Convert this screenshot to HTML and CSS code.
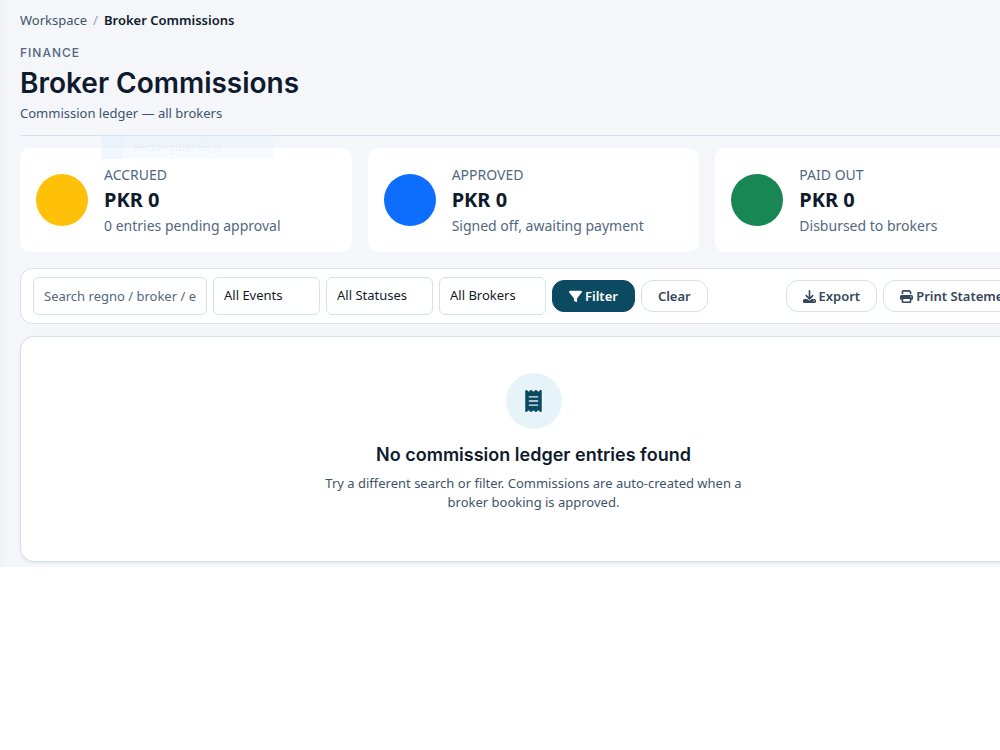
FILE: index.html
```html
<!DOCTYPE html>
<html lang="en">
<head>
    <meta charset="UTF-8">
    <meta name="viewport" content="width=device-width, initial-scale=1.0">
    <title>Broker Commissions</title>
    <link rel="stylesheet" href="styles.css">
</head>
<body>
    <main class="page">
        <nav class="breadcrumb" aria-label="Breadcrumb">
            <a href="#">Workspace</a>
            <span class="sep">/</span>
            <span class="current">Broker Commissions</span>
        </nav>

        <header class="page-header">
            <div class="eyebrow">FINANCE</div>
            <h1>Broker Commissions</h1>
            <p>Commission ledger — all brokers</p>
            <div class="snip-hint"><span class="snip-mark"></span>Rectangular Snip</div>
        </header>

        <section class="stats">
            <div class="stat">
                <span class="dot dot-accrued"></span>
                <div>
                    <div class="stat-label">ACCRUED</div>
                    <div class="stat-value">PKR 0</div>
                    <div class="stat-note">0 entries pending approval</div>
                </div>
            </div>
            <div class="stat">
                <span class="dot dot-approved"></span>
                <div>
                    <div class="stat-label">APPROVED</div>
                    <div class="stat-value">PKR 0</div>
                    <div class="stat-note">Signed off, awaiting payment</div>
                </div>
            </div>
            <div class="stat">
                <span class="dot dot-paid"></span>
                <div>
                    <div class="stat-label">PAID OUT</div>
                    <div class="stat-value">PKR 0</div>
                    <div class="stat-note">Disbursed to brokers</div>
                </div>
            </div>
        </section>

        <form class="filters">
            <input class="field search" type="text" aria-label="Search" placeholder="Search regno / broker / event">
            <select class="field" aria-label="Event"><option>All Events</option></select>
            <select class="field" aria-label="Status"><option>All Statuses</option></select>
            <select class="field" aria-label="Broker"><option>All Brokers</option></select>
            <button class="btn btn-primary" type="button">
                <svg class="icon" viewBox="0 0 512 512"><path d="M3.9 54.9C10.5 40.9 24.5 32 40 32H472c15.5 0 29.5 8.9 36.1 22.9s4.6 30.5-5.2 42.5L320 320.9V448c0 12.1-6.8 23.2-17.7 28.6s-23.8 4.3-33.5-3l-64-48c-8.1-6-12.8-15.5-12.8-25.6V320.9L9 97.3C-.7 85.4-2.8 68.8 3.9 54.9z"/></svg>
                Filter
            </button>
            <button class="btn" type="button">Clear</button>
            <div class="actions">
                <button class="btn" type="button">
                    <svg class="icon" viewBox="0 0 512 512"><path d="M288 32c0-17.7-14.3-32-32-32s-32 14.3-32 32V274.7l-73.4-73.4c-12.5-12.5-32.8-12.5-45.3 0s-12.5 32.8 0 45.3l128 128c12.5 12.5 32.8 12.5 45.3 0l128-128c12.5-12.5 12.5-32.8 0-45.3s-32.8-12.5-45.3 0L288 274.7V32zM64 352c-35.3 0-64 28.7-64 64v32c0 35.3 28.7 64 64 64H448c35.3 0 64-28.7 64-64V416c0-35.3-28.7-64-64-64H346.5l-45.3 45.3c-25 25-65.5 25-90.5 0L165.5 352H64zm368 56a24 24 0 1 1 0 48 24 24 0 1 1 0-48z"/></svg>
                    Export
                </button>
                <button class="btn" type="button">
                    <svg class="icon" viewBox="0 0 512 512"><path d="M128 0C92.7 0 64 28.7 64 64v96h64V64H354.7L384 93.3V160h64V93.3c0-17-6.7-33.3-18.7-45.3L400 18.7C388 6.7 371.7 0 354.7 0H128zM384 352v32 64H128V384 368 352H384zm64 32h32c17.7 0 32-14.3 32-32V256c0-35.3-28.7-64-64-64H64c-35.3 0-64 28.7-64 64v96c0 17.7 14.3 32 32 32H64v64c0 35.3 28.7 64 64 64H384c35.3 0 64-28.7 64-64V384zM432 248a24 24 0 1 1 0 48 24 24 0 1 1 0-48z"/></svg>
                    Print Statement
                </button>
            </div>
        </form>

        <section class="empty">
            <div class="empty-icon">
                <svg viewBox="0 0 384 512"><path d="M14 2.2C22.5-1.7 32.5-.3 39.6 5.8L80 40.4 120.4 5.8c9-7.7 22.3-7.7 31.2 0L192 40.4 232.4 5.8c9-7.7 22.3-7.7 31.2 0L304 40.4 344.4 5.8c7.1-6.1 17.1-7.5 25.6-3.6s14 12.4 14 21.8V488c0 9.4-5.5 17.9-14 21.8s-18.5 2.5-25.6-3.6L304 471.6l-40.4 34.6c-9 7.7-22.3 7.7-31.2 0L192 471.6l-40.4 34.6c-9 7.7-22.3 7.7-31.2 0L80 471.6 39.6 506.2c-7.1 6.1-17.1 7.5-25.6 3.6S0 497.4 0 488V24C0 14.6 5.5 6.1 14 2.2zM96 144c-8.8 0-16 7.2-16 16s7.2 16 16 16H288c8.8 0 16-7.2 16-16s-7.2-16-16-16H96zM80 352c0 8.8 7.2 16 16 16H288c8.8 0 16-7.2 16-16s-7.2-16-16-16H96c-8.8 0-16 7.2-16 16zM96 240c-8.8 0-16 7.2-16 16s7.2 16 16 16H288c8.8 0 16-7.2 16-16s-7.2-16-16-16H96z"/></svg>
            </div>
            <h2>No commission ledger entries found</h2>
            <p>Try a different search or filter. Commissions are auto-created when a broker booking is approved.</p>
        </section>
    </main>
</body>
</html>
```
FILE: styles.css
```css
* {
    box-sizing: border-box;
}

body {
    margin: 0;
    overflow-x: hidden;
    background: #ffffff;
    color: #0f1b2d;
    font-family: "Noto Sans", sans-serif;
    font-size: 13px;
    line-height: 20px;
}

h1,
h2,
p {
    margin: 0;
}

/* wider than small windows, the right side runs off */
.page {
    min-width: 1067px;
    padding: 10px 20px 5px;
    background: linear-gradient(to right, #f1f3f8, #f4f6fa 8px);
}

.breadcrumb {
    display: flex;
    gap: 6px;
}

.breadcrumb a {
    color: #40536a;
    text-decoration: none;
}

.breadcrumb .sep {
    color: #94a3b4;
}

.breadcrumb .current {
    font-weight: 600;
}

/* Header */
.page-header {
    position: relative;
    margin-top: 13px;
    padding-bottom: 12px;
    border-bottom: 1px solid #d5e0ec;
}

.eyebrow {
    color: #52677f;
    font-family: Inter, sans-serif;
    font-size: 12px;
    font-weight: 500;
    letter-spacing: 1px;
}

h1 {
    padding: 3px 0 2px;
    font-family: Inter, sans-serif;
    font-size: 28px;
    font-weight: 600;
    line-height: 35px;
}

.page-header p {
    color: #40536a;
}

.snip-hint {
    position: absolute;
    top: 100%;
    left: 81px;
    display: flex;
    align-items: center;
    gap: 10px;
    width: 172px;
    height: 24px;
    background: rgba(228, 238, 255, 0.3);
    color: rgba(90, 100, 115, 0.08);
    font-size: 11px;
}

.snip-mark {
    width: 22px;
    height: 24px;
    background: rgba(215, 235, 255, 0.2);
}

/* Totals */
.stats {
    display: grid;
    grid-template-columns: repeat(3, 1fr);
    gap: 16px;
    margin-top: 12px;
}

.stat {
    display: flex;
    align-items: center;
    gap: 16px;
    padding: 16px;
    border-radius: 10px;
    background: #ffffff;
}

.dot {
    width: 52px;
    height: 52px;
    border-radius: 50%;
}

.dot-accrued {
    background: #ffc107;
}

.dot-approved {
    background: #0d6efd;
}

.dot-paid {
    background: #198754;
}

.stat-label,
.stat-note {
    color: #52677f;
    font-size: 14px;
    line-height: 21px;
}

.stat-value {
    font-size: 20px;
    font-weight: 700;
    line-height: 30px;
}

/* Filter bar */
.filters {
    display: flex;
    align-items: center;
    gap: 6px;
    margin-top: 16px;
    padding: 8px 12px;
    border: 1px solid #d5e0ec;
    border-radius: 12px;
    background: #ffffff;
}

.field {
    width: 107px;
    height: 38px;
    padding: 0 10px 2px;
    border: 1px solid #d5e0ec;
    border-radius: 6px;
    background: #ffffff;
    color: #0f1b2d;
    font: inherit;
    appearance: none;
}

.field.search {
    width: 174px;
    padding: 0 10px;
}

.field::placeholder {
    color: #52677f;
    opacity: 1;
}

.btn {
    display: flex;
    align-items: center;
    gap: 3px;
    height: 32px;
    padding: 0 16px;
    border: 1px solid #d5e0ec;
    border-radius: 12px;
    background: #ffffff;
    color: #34475c;
    font: inherit;
    font-weight: 600;
    white-space: nowrap;
    cursor: pointer;
}

.btn-primary {
    border-color: #0b4a60;
    background: #0b4a60;
    color: #ffffff;
}

.icon {
    width: 13px;
    height: 13px;
    fill: currentColor;
}

.actions {
    display: flex;
    gap: 6px;
    margin-left: auto;
}

/* Empty state */
.empty {
    display: flex;
    flex-direction: column;
    align-items: center;
    margin-top: 12px;
    padding: 36px 24px 49px;
    border: 1px solid #d5e0ec;
    border-radius: 14px;
    background: #ffffff;
    box-shadow: 0 1px 3px rgba(15, 40, 80, 0.08);
    text-align: center;
}

.empty-icon {
    display: flex;
    align-items: center;
    justify-content: center;
    width: 56px;
    height: 56px;
    border-radius: 50%;
    background: #e6f3f9;
}

.empty-icon svg {
    width: 17px;
    height: 22px;
    fill: #0b4a60;
}

.empty h2 {
    margin-top: 14px;
    font-family: Inter, sans-serif;
    font-size: 18px;
    font-weight: 600;
    line-height: 24px;
}

.empty p {
    max-width: 420px;
    margin-top: 7px;
    color: #40536a;
    line-height: 19px;
}
```
